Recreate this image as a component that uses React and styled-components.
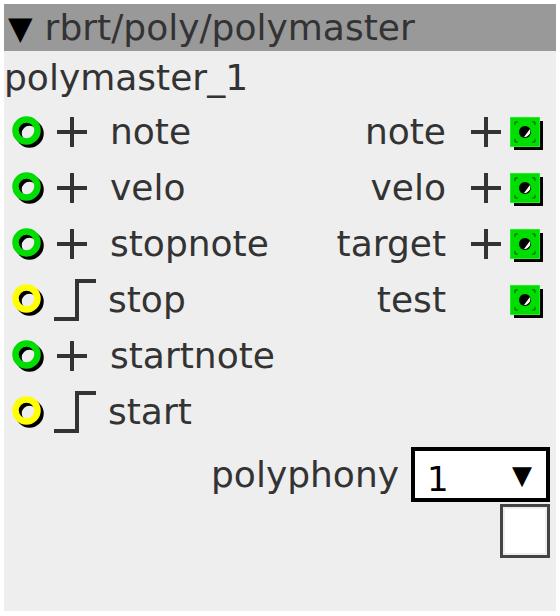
import React from 'react';
import styled, { createGlobalStyle } from 'styled-components';

const GlobalStyle = createGlobalStyle`
  body {
    margin: 0;
    background: #ffffff;
  }
`;

const inlets = [
  { name: 'note', kind: 'poly' },
  { name: 'velo', kind: 'poly' },
  { name: 'stopnote', kind: 'poly' },
  { name: 'stop', kind: 'trig' },
  { name: 'startnote', kind: 'poly' },
  { name: 'start', kind: 'trig' },
];

const outlets = [
  { name: 'note', poly: true },
  { name: 'velo', poly: true },
  { name: 'target', poly: true },
  { name: 'test', poly: false },
];

const Inlet = ({ color }) => (
  <svg width="36" height="36" viewBox="0 0 36 36">
    <circle cx="17.5" cy="17.5" r="11" fill="none" stroke="#000" strokeWidth="6.5" />
    <circle cx="14.5" cy="14.5" r="11" fill="none" stroke={color} strokeWidth="6.5" />
  </svg>
);

const Plus = () => (
  <svg width="32" height="32" viewBox="0 0 32 32">
    <path d="M1 16 H31 M16 1 V31" stroke="#333" strokeWidth="4" fill="none" />
  </svg>
);

const Step = () => (
  <svg width="42" height="44" viewBox="0 0 42 44">
    <path d="M0 41 H23 V3 H42" stroke="#333" strokeWidth="4" fill="none" />
  </svg>
);

const Outlet = () => (
  <svg width="34" height="34" viewBox="0 0 34 34">
    <rect x="4" y="4" width="29" height="29" fill="#000" />
    <rect x="0.5" y="0.5" width="29" height="29" fill="#00dd00" stroke="#22ee22" />
    <path
      d="M5 8 V5 H8 M22 5 H25 V8 M25 22 V25 H22 M8 25 H5 V22"
      stroke="#115511"
      strokeWidth="1"
      fill="none"
    />
    <circle cx="15" cy="15" r="6" fill="#000" />
    <path d="M20 12 A6 6 0 0 1 14 20 L20 12 Z" fill="#fff" />
  </svg>
);

const Panel = styled.div`
  margin: 4px;
  width: 552px;
  height: 607px;
  background: #eeeeee;
  font-family: 'DejaVu Sans', 'Liberation Sans', sans-serif;
  font-size: 36px;
  color: #333333;
  display: flex;
  flex-direction: column;
`;

const Header = styled.div`
  height: 47px;
  background: #999999;
  display: flex;
  align-items: center;
  padding-left: 4px;
  gap: 12px;
  line-height: 1;
`;

const Arrow = styled.span`
  color: #000;
  font-size: 32px;
`;

const Title = styled.div`
  height: 53px;
  display: flex;
  align-items: center;
`;

const Ports = styled.div`
  display: flex;
  justify-content: space-between;
`;

const Column = styled.div`
  display: flex;
  flex-direction: column;
`;

const Row = styled.div`
  height: 56px;
  display: flex;
  align-items: center;
  justify-content: ${({ $right }) => ($right ? 'flex-end' : 'flex-start')};
`;

const InletSlot = styled.div`
  width: 42px;
  padding-left: 8px;
  display: flex;
  align-items: center;
  margin-top: 3px;
`;

const TypeSlot = styled.div`
  width: 54px;
  display: flex;
  align-items: center;
  padding-left: ${({ $trig }) => ($trig ? '0' : '2px')};
`;

const Label = styled.span`
  line-height: 1;
`;

const OutTypeSlot = styled.div`
  width: 32px;
  margin-left: 24px;
  display: flex;
  align-items: center;
`;

const OutletSlot = styled.div`
  width: 46px;
  padding-left: 8px;
  display: flex;
  align-items: center;
  margin-top: 4px;
`;

const Params = styled.div`
  display: flex;
  flex-direction: column;
  align-items: flex-end;
  padding-right: 6px;
  margin-top: 7px;
`;

const ParamRow = styled.div`
  display: flex;
  align-items: center;
  gap: 12px;
`;

const Select = styled.div`
  box-sizing: border-box;
  width: 139px;
  height: 55px;
  border: 4px solid #000;
  background: #fff;
  display: flex;
  justify-content: space-between;
  align-items: center;
  padding: 0 14px 0 12px;
  color: #000;
`;

const SelectValue = styled.span`
  font-size: 34px;
  margin-top: 8px;
`;

const SelectArrow = styled.span`
  font-size: 26px;
`;

const Toggle = styled.div`
  margin-top: 2px;
  width: 50px;
  height: 54px;
  box-sizing: border-box;
  border: 3px solid #444;
  background: #fff;
  box-shadow: inset 0 0 0 2px #eeeeee;
`;

const App = () => (
  <>
    <GlobalStyle />
    <Panel>
      <Header>
        <Arrow>▼</Arrow>
        <span>rbrt/poly/polymaster</span>
      </Header>
      <Title>polymaster_1</Title>
      <Ports>
        <Column>
          {inlets.map((inlet) => (
            <Row key={inlet.name}>
              <InletSlot>
                <Inlet color={inlet.kind === 'trig' ? '#ffff00' : '#00dd00'} />
              </InletSlot>
              <TypeSlot $trig={inlet.kind === 'trig'}>
                {inlet.kind === 'trig' ? <Step /> : <Plus />}
              </TypeSlot>
              <Label>{inlet.name}</Label>
            </Row>
          ))}
        </Column>
        <Column>
          {outlets.map((outlet) => (
            <Row key={outlet.name} $right>
              <Label>{outlet.name}</Label>
              <OutTypeSlot>{outlet.poly && <Plus />}</OutTypeSlot>
              <OutletSlot>
                <Outlet />
              </OutletSlot>
            </Row>
          ))}
        </Column>
      </Ports>
      <Params>
        <ParamRow>
          <Label>polyphony</Label>
          <Select>
            <SelectValue>1</SelectValue>
            <SelectArrow>▼</SelectArrow>
          </Select>
        </ParamRow>
        <Toggle />
      </Params>
    </Panel>
  </>
);

export default App;
